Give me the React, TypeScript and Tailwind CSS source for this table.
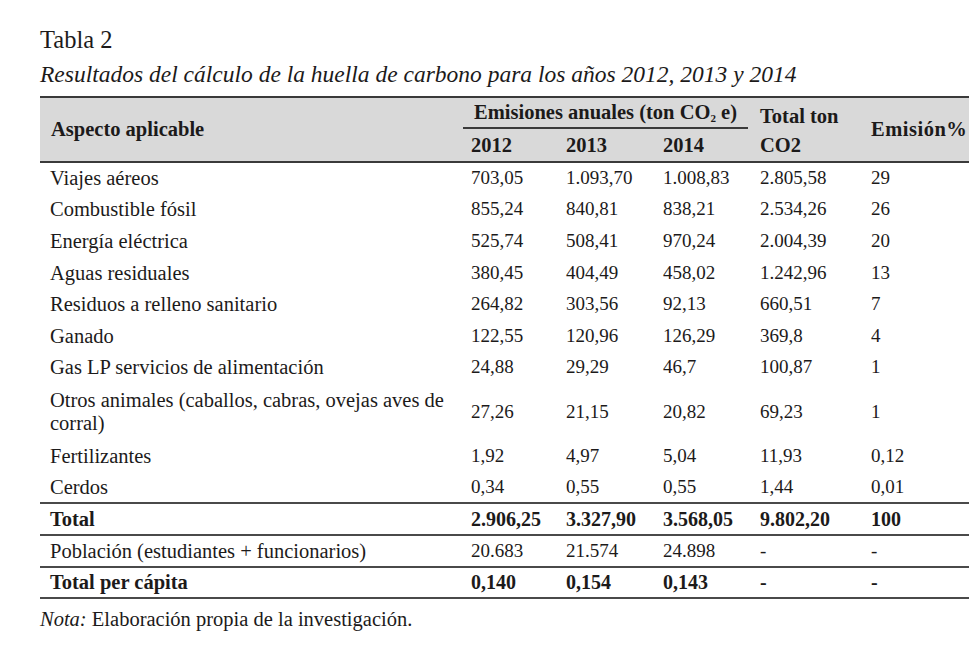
import React from "react";

type Row = { label: React.ReactNode; v: string[]; bold?: boolean; two?: boolean; line?: boolean };

const rows: Row[] = [
  { label: "Viajes aéreos", v: ["703,05", "1.093,70", "1.008,83", "2.805,58", "29"] },
  { label: "Combustible fósil", v: ["855,24", "840,81", "838,21", "2.534,26", "26"] },
  { label: "Energía eléctrica", v: ["525,74", "508,41", "970,24", "2.004,39", "20"] },
  { label: "Aguas residuales", v: ["380,45", "404,49", "458,02", "1.242,96", "13"] },
  { label: "Residuos a relleno sanitario", v: ["264,82", "303,56", "92,13", "660,51", "7"] },
  { label: "Ganado", v: ["122,55", "120,96", "126,29", "369,8", "4"] },
  { label: "Gas LP servicios de alimentación", v: ["24,88", "29,29", "46,7", "100,87", "1"] },
  {
    label: (
      <>
        Otros animales (caballos, cabras, ovejas aves de
        <br />
        corral)
      </>
    ),
    v: ["27,26", "21,15", "20,82", "69,23", "1"],
    two: true,
  },
  { label: "Fertilizantes", v: ["1,92", "4,97", "5,04", "11,93", "0,12"] },
  { label: "Cerdos", v: ["0,34", "0,55", "0,55", "1,44", "0,01"], line: true },
  { label: "Total", v: ["2.906,25", "3.327,90", "3.568,05", "9.802,20", "100"], bold: true, line: true },
  { label: "Población (estudiantes + funcionarios)", v: ["20.683", "21.574", "24.898", "-", "-"], line: true },
  { label: "Total per cápita", v: ["0,140", "0,154", "0,143", "-", "-"], bold: true, line: true },
];

export default function App() {
  return (
    <div
      className="w-[975px] h-[664px] bg-white text-[#1c1a1a] pl-[40px] pt-[26px]"
      style={{ fontFamily: '"Liberation Serif", "Times New Roman", serif' }}
    >
      <div className="text-[24.5px] leading-[28px]">Tabla 2</div>
      <div className="text-[23.5px] leading-[28px] italic mt-[6px]">
        Resultados del cálculo de la huella de carbono para los años 2012, 2013 y 2014
      </div>
      <table className="mt-[8px] w-[929px] border-collapse table-fixed text-[19px]">
        <colgroup>
          <col className="w-[421px]" />
          <col className="w-[95px]" />
          <col className="w-[97px]" />
          <col className="w-[97px]" />
          <col className="w-[111px]" />
          <col className="w-[108px]" />
        </colgroup>
        <thead className="text-[20.5px]">
          <tr className="bg-[#d9d9d9] border-t-2 border-[#3a3a3a] font-bold">
            <th rowSpan={2} className="text-left align-middle pl-[11px] font-bold">
              Aspecto aplicable
            </th>
            <th colSpan={3} className="h-[30px] text-center align-middle pt-[1px] font-bold">
              <div className="mx-[2px] border-b-2 border-[#3a3a3a] leading-[27px] pb-[1px]">
                Emisiones anuales (ton CO<sub className="text-[11px]">2</sub> e)
              </div>
            </th>
            <th rowSpan={2} className="text-left align-middle pl-[10px] leading-[29px] font-bold pt-[2px]">
              Total ton
              <br />
              CO2
            </th>
            <th rowSpan={2} className="text-left align-middle pl-[10px] font-bold tracking-[0.5px]">
              Emisión%
            </th>
          </tr>
          <tr className="bg-[#d9d9d9] border-b-2 border-[#3a3a3a]">
            <th className="h-[33px] text-left pl-[10px] align-middle pt-[1px] font-bold">2012</th>
            <th className="text-left pl-[10px] align-middle pt-[1px] font-bold">2013</th>
            <th className="text-left pl-[10px] align-middle pt-[1px] font-bold">2014</th>
          </tr>
        </thead>
        <tbody>
          {rows.map((r, i) => (
            <tr
              key={i}
              className={`${r.bold ? "font-bold" : ""} ${r.line ? "border-b-2 border-[#4a4a4a]" : ""}`}
            >
              <td
                className={`pl-[10px] align-middle text-[20.5px] ${r.two ? "h-[57px] leading-[23px]" : "h-[31.6px] leading-[24px]"}`}
              >
                {r.label}
              </td>
              {r.v.map((x, j) => (
                <td
                  key={j}
                  className={`pl-[10px] align-middle leading-[24px] ${r.bold ? "text-[20px]" : "text-[19px]"}`}
                >
                  {x}
                </td>
              ))}
            </tr>
          ))}
        </tbody>
      </table>
      <div className="text-[20.5px] leading-[28px] mt-[6px]">
        <span className="italic">Nota:</span> Elaboración propia de la investigación.
      </div>
    </div>
  );
}
